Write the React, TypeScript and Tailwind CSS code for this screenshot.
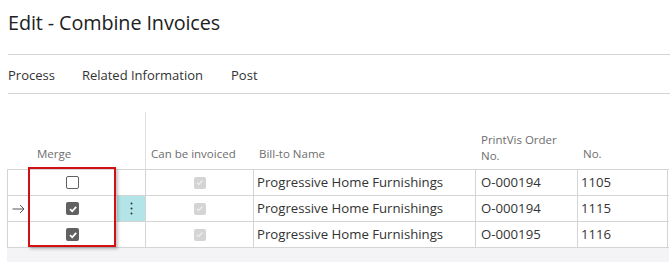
import React from 'react';

interface Row {
  merge: boolean;
  current: boolean;
  billTo: string;
  order: string;
  no: string;
}

const rows: Row[] = [
  { merge: false, current: false, billTo: 'Progressive Home Furnishings', order: 'O-000194', no: '1105' },
  { merge: true, current: true, billTo: 'Progressive Home Furnishings', order: 'O-000194', no: '1115' },
  { merge: true, current: false, billTo: 'Progressive Home Furnishings', order: 'O-000195', no: '1116' },
];

const Check = ({ checked, disabled }: { checked: boolean; disabled?: boolean }) => {
  if (disabled) {
    return (
      <span className="flex h-[12px] w-[12px] items-center justify-center rounded-[2px] bg-[#d4d4d4]">
        <svg width="9" height="9" viewBox="0 0 10 10">
          <path d="M2 5.2 L4.2 7.3 L8.2 2.8" fill="none" stroke="#ececec" strokeWidth="1.6" />
        </svg>
      </span>
    );
  }
  if (checked) {
    return (
      <span className="flex h-[13px] w-[13px] items-center justify-center rounded-[2px] bg-[#616161]">
        <svg width="10" height="10" viewBox="0 0 10 10">
          <path d="M2 5.2 L4.2 7.3 L8.2 2.8" fill="none" stroke="#ffffff" strokeWidth="1.8" />
        </svg>
      </span>
    );
  }
  return <span className="h-[13px] w-[13px] rounded-[2px] border border-[#616161] bg-white" />;
};

const App: React.FC = () => {
  return (
    <div className="h-[262px] w-[670px] overflow-hidden bg-white font-['Open_Sans',sans-serif] text-[#212121]">
      <h1 className="pl-[8px] pt-[9px] text-[19.8px] leading-[27px] tracking-[-0.1px]">Edit - Combine Invoices</h1>
      <div className="ml-[8px] mt-[18px] border-t border-[#d4d4d4]" />
      <div className="flex h-[38px] items-center pl-[8px] pt-[4px] text-[13px] text-[#333]">
        <span className="mr-[27px]">Process</span>
        <span className="mr-[28px]">Related Information</span>
        <span>Post</span>
      </div>
      <div className="ml-[8px] border-t border-[#d4d4d4]" />

      <div className="relative ml-[7px] mt-[18px] w-[662px]">
        {/* header */}
        <div className="flex h-[57px] text-[11.5px] text-[#6e6e6e]">
          <div className="w-[138px] pl-[30px] flex items-end pb-[7px]">Merge</div>
          <div className="w-[108px] border-l border-[#e0e0e0] pl-[5px] flex items-end pb-[7px]">Can be invoiced</div>
          <div className="w-[222px] pl-[6px] flex items-end pb-[7px]">Bill-to Name</div>
          <div className="w-[102px] pl-[6px] flex items-end pb-[5px] leading-[16px]">
            PrintVis Order
            <br />
            No.
          </div>
          <div className="w-[91px] pl-[6px] flex items-end pb-[7px]">No.</div>
        </div>
        {/* rows */}
        <div className="border-t border-[#d4d4d4] text-[13.2px] text-[#333]">
          {rows.map((r, i) => (
            <div key={i} className="flex h-[26px] border-b border-[#d4d4d4]">
              <div className="flex w-[21px] items-center justify-center border-l border-[#d4d4d4] text-[#555]">
                {r.current && (
                  <svg width="13" height="10" viewBox="0 0 13 10">
                    <path d="M0.5 5 H12 M8 1 L12 5 L8 9" fill="none" stroke="#555" strokeWidth="1" />
                  </svg>
                )}
              </div>
              <div className="flex w-[89px] items-center justify-center">
                <Check checked={r.merge} />
              </div>
              <div className={`flex w-[28px] items-center justify-center ${r.current ? 'bg-[#b2e4e8]' : ''}`}>
                {r.current && (
                  <svg width="3" height="13" viewBox="0 0 3 13">
                    <circle cx="1.5" cy="1.5" r="1" fill="#333" />
                    <circle cx="1.5" cy="6.5" r="1" fill="#333" />
                    <circle cx="1.5" cy="11.5" r="1" fill="#333" />
                  </svg>
                )}
              </div>
              <div className="flex w-[108px] items-center justify-center border-l border-[#d4d4d4]">
                <Check checked disabled />
              </div>
              <div className="flex w-[222px] items-center border-l border-[#d4d4d4] pl-[3px]">{r.billTo}</div>
              <div className="flex w-[102px] items-center border-l border-[#d4d4d4] pl-[5px]">{r.order}</div>
              <div className="flex w-[91px] items-center border-x border-[#d4d4d4] pl-[3px]">{r.no}</div>
            </div>
          ))}
        </div>
        <div className="h-[20px] bg-[#f4f4f6]" />
        {/* highlight */}
        <div className="absolute left-[21px] top-[55px] h-[80px] w-[88px] border-2 border-[#d40f14] shadow-[2px_2px_3px_rgba(0,0,0,0.25)]" />
      </div>
    </div>
  );
};

export default App;
